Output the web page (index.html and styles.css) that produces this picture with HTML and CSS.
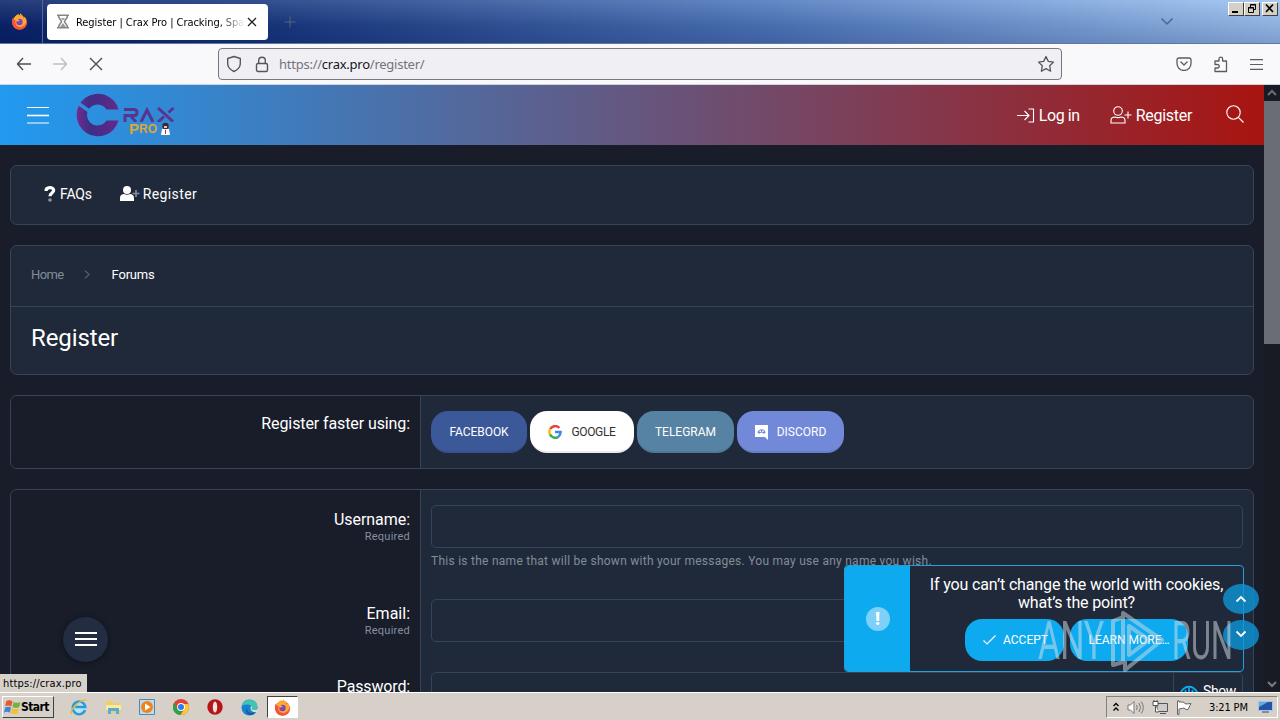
FILE: index.html
```html
<!DOCTYPE html>
<html lang="en">
<head>
<meta charset="utf-8">
<title>Register | Crax Pro</title>
<link rel="stylesheet" href="styles.css">
</head>
<body>
<div class="screen">
  <header class="tabbar">
    <div class="fxview">
      <svg width="17" height="17" viewBox="0 0 18 18"><use href="#firefox"/></svg>
    </div>
    <div class="tab">
      <svg class="hourglass" width="14" height="15" viewBox="0 0 14 15" fill="none" stroke="#858585" stroke-width="1.6"><path d="M1 1.2h12M1 13.8h12M2.5 1.5c0 3.5 3 4.5 3 6s-3 2.500-3 6M11.500 1.500c0 3.500-3 4.500-3 6s3 2.500 3 6"/><path d="M5 4h4L7 6.500zM7 9l3 4H4z" fill="#999" stroke="none"/></svg>
      <span class="tab-title">Register | Crax Pro | Cracking, Spamming</span>
      <svg class="tab-close" width="10" height="10" viewBox="0 0 10 10" stroke="#222" stroke-width="1.3"><path d="M1 1l8 8M9 1L1 9"/></svg>
    </div>
    <svg class="newtab" width="12" height="12" viewBox="0 0 12 12" stroke="#53647f"><path d="M6 0.500v11M0.500 6h11"/></svg>
    <svg class="alltabs" width="14" height="9" viewBox="0 0 14 9" fill="none" stroke="#496795" stroke-width="1.500"><path d="M1.500 1.500L7 7l5.500-5.500"/></svg>
    <div class="winbtns">
      <span class="winbtn"><svg width="14" height="12" viewBox="0 0 14 12"><path d="M3 8h6v2H3z"/></svg></span>
      <span class="winbtn"><svg width="14" height="12" viewBox="0 0 14 12" fill="none" stroke="#000"><path d="M5.500 4V1.500h5v5H9M5 2h6M3.500 4.500h5v5h-5zM3 5h6"/></svg></span>
      <span class="winbtn close"><svg width="14" height="12" viewBox="0 0 14 12" stroke="#000" stroke-width="1.700"><path d="M3 1.500l7 7.500M10 1.500L3 9"/></svg></span>
    </div>
  </header>

  <nav class="toolbar">
    <svg class="nav-back" width="16" height="14" viewBox="0 0 16 14" fill="none" stroke="#4c4c57" stroke-width="1.400"><path d="M15 7H1.500M7 1L1.500 7 7 13"/></svg>
    <svg class="nav-fwd" width="16" height="14" viewBox="0 0 16 14" fill="none" stroke="#bdbdc4" stroke-width="1.400"><path d="M1 7h13.500M9 1l5.500 6L9 13"/></svg>
    <svg class="nav-stop" width="14" height="14" viewBox="0 0 14 14" stroke="#4c4c57" stroke-width="1.400"><path d="M1 1l12 12M13 1L1 13"/></svg>
    <div class="urlbar">
      <svg width="16" height="18" viewBox="0 0 16 18" fill="none" stroke="#55555f" stroke-width="1.400"><path d="M8 1.500l6.300 2v5c0 4-3 6.500-6.300 8-3.300-1.500-6.300-4-6.300-8v-5z" stroke-linejoin="round"/></svg>
      <svg class="lock" width="14" height="17" viewBox="0 0 14 17" fill="none" stroke="#55555f" stroke-width="1.400"><rect x="1.500" y="7.500" width="11" height="8" rx="1.500"/><path d="M3.700 7.500V4.500a3.300 3.300 0 0 1 6.600 0v3"/></svg>
      <span class="url">https://<b>crax.pro</b>/register/</span>
      <svg class="star" width="18" height="18" viewBox="0 0 18 18" fill="none" stroke="#55555f" stroke-width="1.300" stroke-linejoin="round"><path d="M9 1.500l2.300 4.900 5.200.700-3.800 3.700.900 5.400L9 13.600l-4.600 2.600.900-5.400L1.500 7.100l5.200-.700z"/></svg>
    </div>
    <div class="toolbar-end">
      <svg width="16" height="14" viewBox="0 0 16 14" fill="none" stroke="#5b5b66" stroke-width="1.300"><path d="M3 1h10a2 2 0 0 1 2 2v3.500a6.500 6.500 0 0 1-14 0V3a2 2 0 0 1 2-2z"/><path d="M4.500 4.500L8 8l3.500-3.500"/></svg>
      <svg width="16" height="17" viewBox="0 0 16 17" fill="none" stroke="#5b5b66" stroke-width="1.300" stroke-linejoin="round"><path d="M2 15.500V12h2.500a1.700 1.700 0 0 0 0-3.500H2V5h4V3a1.800 1.800 0 0 1 3.600 0v2H13.500v10.500z"/></svg>
      <svg width="13" height="11" viewBox="0 0 13 11" stroke="#5b5b66" stroke-width="1.200"><path d="M0 .6h13M0 5.500h13M0 10.400h13"/></svg>
    </div>
  </nav>

  <main class="view">
    <div class="page">
      <div class="sitehead">
        <svg class="burger" width="22" height="17" viewBox="0 0 22 17" stroke="#fff"><path d="M0 .5h22M0 16h22"/><path d="M0 8.500h22" stroke-width="1.600"/></svg>
        <div class="logo">
          <svg width="43" height="44" viewBox="0 0 43 44"><defs><linearGradient id="lg" x1="0" x2="1"><stop offset="0" stop-color="#74298f"/><stop offset=".3" stop-color="#3f2f87"/><stop offset=".6" stop-color="#4c2b87"/><stop offset="1" stop-color="#65298c"/></linearGradient></defs><path d="M42.500 16.500A21.300 21.300 0 1 0 42.500 27.500H30.500A10.500 10.500 0 1 1 30.500 16.500z" fill="url(#lg)"/><path d="M2.500 10.500l10 7" stroke="#2d8ee0" stroke-width="3.500"/></svg>
          <div class="logo-words">
            <svg width="53" height="15" viewBox="0 0 53 15" fill="none" stroke="#57348f" stroke-width="3"><path d="M2 15V8.500h9c4 0 4-6 0-6H1M7 8l6 7M18 15l6-12 6 12M35 1l15 13.500M50.500 1l-5 4.500M41 9.500L35 15"/></svg>
            <span class="logo-pro">P<small>RO</small><svg width="9" height="14" viewBox="0 0 9 14"><path d="M1 7h7l1 6H0z" fill="#fff"/><circle cx="4.500" cy="4" r="3.200" fill="#392733"/><path d="M3 4h3v2H3z" fill="#f3c3a4"/><path d="M4 8h1v4H4z" fill="#c33"/></svg></span>
          </div>
        </div>
        <a class="login"><svg width="18" height="15" viewBox="0 0 18 15" fill="none" stroke="#fff" stroke-width="1.100"><path d="M0 7.500h12M7.500 3L12 7.500 7.500 12M11.500 1h5v13h-5"/></svg>Log in</a>
        <a class="signup"><svg width="22" height="18" viewBox="0 0 22 18" fill="none" stroke="#fff" stroke-width="1.100"><circle cx="8" cy="5" r="4.300"/><path d="M1 17v-2.500c0-2.500 2-3.500 4-3.500 2 .800 4 .800 6 0 2 0 4 1 4 3.500V17zM18 5.500v7M14.500 9h7"/></svg>Register</a>
        <svg class="search" width="18" height="18" viewBox="0 0 18 18" fill="none" stroke="#fff" stroke-width="1.100"><circle cx="7.500" cy="7.500" r="6.700"/><path d="M12.500 12.500l5 5"/></svg>
      </div>

      <div class="content">
        <div class="card menu">
          <a><svg width="12" height="16" viewBox="0 0 12 16"><path d="M2 5C2 .5 9.700 .7 9.700 4.300c0 2.700-3.700 2.700-3.700 6" fill="none" stroke="#fff" stroke-width="3.200"/><circle cx="6" cy="14" r="1.800" fill="#8d949f"/></svg><span class="faq">FAQs</span></a>
          <a class="menu-register"><svg width="20" height="16" viewBox="0 0 20 16"><circle cx="7" cy="4" r="4" fill="#fff"/><path d="M0 15v-3c0-3 2-4 4-4 2 1 4 1 6 0 2 0 4 1 4 4v3z" fill="#fff"/><path d="M16 4v7M12.500 7.500h7" stroke="#858e9b" stroke-width="1.600"/></svg><span>Register</span></a>
        </div>

        <div class="card titles">
          <div class="crumbs"><span class="crumb-home">Home</span><svg width="6" height="9" viewBox="0 0 6 9" fill="none" stroke="#7c8794"><path d="M1 .5l4 4-4 4"/></svg><span class="crumb-forums">Forums</span></div>
          <h1>Register</h1>
        </div>

        <div class="card fast">
          <div class="label"><span class="lbl l-fast">Register faster using:</span></div>
          <div class="field providers">
            <a class="prov facebook">FACEBOOK</a>
            <a class="prov google"><svg width="14" height="14" viewBox="0 0 14 14" fill="none" stroke-width="2.500"><path d="M2.200 4A5.600 5.600 0 0 1 11.300 3" stroke="#ea4335"/><path d="M2.200 4.200a5.600 5.600 0 0 0 0 5.600" stroke="#fbbc05"/><path d="M2.100 9.500a5.600 5.600 0 0 0 8.500 2.200" stroke="#34a853"/><path d="M10.500 11.600A5.500 5.500 0 0 0 12.600 7H7" stroke="#4285f4"/></svg>GOOGLE</a>
            <a class="prov telegram">TELEGRAM</a>
            <a class="prov discord"><svg width="13" height="15" viewBox="0 0 13 15"><path d="M0 0h13v15l-3-3H0z" fill="#fff"/><path d="M2.500 8c0-5 8-5 8 0l-2 .8-1-1H5.500l-1 1z" fill="#7289da"/><path d="M4.500 5.500h1.500v1.500H4.500zM7.200 5.500h1.500v1.500H7.200z" fill="#fff"/></svg>DISCORD</a>
          </div>
        </div>

        <div class="card form">
          <div class="row username">
            <div class="label"><span class="lbl l-user">Username:</span><small>Required</small></div>
            <div class="field"><div class="input"></div><p class="hint">This is the name that will be shown with your messages. You may use any name you wish.</p></div>
          </div>
          <div class="row email">
            <div class="label"><span class="lbl l-email">Email:</span><small>Required</small></div>
            <div class="field"><div class="input"></div></div>
          </div>
          <div class="row password">
            <div class="label"><span class="lbl l-pass">Password:</span></div>
            <div class="field"><div class="input pass"><span class="show"><svg width="18" height="14" viewBox="0 0 18 14" fill="none" stroke="#0eaaf0" stroke-width="1.800"><path d="M1 7c4-7 12-7 16 0-4 7-12 7-16 0z"/><path d="M9 3v7" /><path d="M6 5a3.500 3.500 0 1 0 6 0"/></svg>Show</span></div></div>
          </div>
        </div>
      </div>
    </div>
    <div class="scrollbar">
      <svg width="16" height="16" viewBox="0 0 16 16" fill="none" stroke="#6b6e76" stroke-width="2"><path d="M4 10l4-4 4 4"/></svg>
      <div class="thumb"></div>
      <svg class="sb-down" width="16" height="16" viewBox="0 0 16 16" fill="none" stroke="#777b82" stroke-width="2"><path d="M4 6l4 4 4-4"/></svg>
    </div>

    <div class="fab"><i></i><i></i><i></i></div>
    <div class="status">https://crax.pro</div>

    <div class="cookie">
      <div class="cookie-side"><span>!</span></div>
      <div class="cookie-body">
        <p><span class="ck1">If you can’t change the world with cookies,</span><br><span class="ck2">what’s the point?</span></p>
        <div class="cookie-actions">
          <a class="accept"><svg width="13" height="10" viewBox="0 0 13 10" fill="none" stroke="#fff" stroke-width="1.200"><path d="M.5 5.500L4 9l8.500-8.500"/></svg>ACCEPT</a>
          <a class="more">LEARN MORE…</a>
        </div>
      </div>
    </div>
    <div class="jump up"><svg width="12" height="8" viewBox="0 0 12 8" fill="none" stroke="#fff" stroke-width="1.800"><path d="M1.500 6.500L6 2l4.500 4.500"/></svg></div>
    <div class="jump down"><svg width="12" height="8" viewBox="0 0 12 8" fill="none" stroke="#fff" stroke-width="1.800"><path d="M1.500 1.500L6 6l4.500-4.500"/></svg></div>
    <div class="watermark">
      <span class="wm wm-any">ANY</span>
      <svg width="56" height="64" viewBox="0 0 56 64" fill="none" stroke="#d2dce4" stroke-width="4" stroke-linejoin="round"><path d="M14 8L4 12v44l10-3V4l39 27-37 30v-9M20 17v29l20-15z"/></svg>
      <span class="wm wm-run">RUN</span>
    </div>
  </main>

  <footer class="taskbar">
    <div class="start"><svg width="17" height="16" viewBox="0 0 15 14"><path d="M2 2c2-1.500 4-1 5.500 0l-1 4.500c-2-1-4-1-5.500 0z" fill="#e8582a"/><path d="M8.500 2.500c2 1 4 1 6 0l-1 4.500c-2 1-4 1-6 0z" fill="#6fb43c"/><path d="M1 7.500c2-1 3.500-1 5.200 0l-1 4.500c-2-1-3.500-1-5.200 0z" fill="#3e84d8"/><path d="M7.200 8c2 1 4 1 6 0l-1 4.500c-2 1-4 1-6 0z" fill="#f3c02e"/></svg><span>Start</span></div>
    <div class="apps">
      <span class="app"><svg width="18" height="18" viewBox="0 0 18 18" fill="none"><circle cx="9" cy="9" r="7" fill="#b8e4f8"/><path d="M15 12A6.300 6.300 0 1 1 15.300 9H5" stroke="#2d9bd8" stroke-width="2.500"/><path d="M1.500 16C-1 12 11 1 16.500 2" stroke="#edb83a" stroke-width="1.400"/></svg></span>
      <span class="app"><svg width="17" height="16" viewBox="0 0 17 16"><path d="M1 2h6l1 2h8v10H1z" fill="#efcf68"/><path d="M1 6h15v5H1z" fill="#fae9a5"/><path d="M3 9h11v6h-3v-3H6v3H3z" fill="#5aacd8"/></svg></span>
      <span class="app"><svg width="16" height="16" viewBox="0 0 16 16"><path d="M.5.5h15v15H.5z" fill="#bcdbf0" stroke="#4d8ab9"/><circle cx="8" cy="8" r="6" fill="#ef851a"/><path d="M6 4.500v7L11.500 8z" fill="#fff"/></svg></span>
      <span class="app"><svg width="16" height="16" viewBox="0 0 16 16"><use href="#chrome"/></svg></span>
      <span class="app"><svg width="16" height="16" viewBox="0 0 16 16"><circle cx="8" cy="8" r="7.700" fill="#b51519"/><ellipse cx="8" cy="8" rx="2.200" ry="5.500" fill="#ece6df"/></svg></span>
      <span class="app"><svg width="17" height="17" viewBox="0 0 17 17"><circle cx="8.500" cy="8.500" r="8" fill="#1b80ce"/><path d="M.8 7C2-2 16-1 16.500 7.500c0 4-5 4-6.500 2.500 2-3-1-5-4-4.500C3.500 5.500 1.500 6 .8 7z" fill="#40c6b0"/><path d="M6 8c-1 5 4 7 9 5-1 1.500-3 3-5 3-5-.5-6-5-4-8z" fill="#125da8"/><path d="M10 7c1.500 1 1.300 2 .5 3 1.500 1.500 4 1 6 0v3c-4 1-8.500-1-6.500-6z" fill="#d7ddd9"/></svg></span>
      <span class="app active"><svg width="17" height="17" viewBox="0 0 18 18"><use href="#firefox"/></svg></span>
    </div>
    <div class="tray">
      <svg width="6" height="10" viewBox="0 0 6 10" fill="none" stroke="#000" stroke-width="1.300"><path d="M.5 4L3 1.500 5.500 4M.5 8.500L3 6l2.500 2.500"/></svg>
      <svg width="17" height="15" viewBox="0 0 17 15" stroke="#777"><path d="M1 5h2.500L7 1.500v12L3.500 10H1z" fill="#fff"/><path d="M9.500 5q1.500 2.500 0 5M12 3q3 4.500 0 9M14.300 1.500q4 6 0 12" fill="none"/></svg>
      <svg width="16" height="15" viewBox="0 0 16 15" stroke="#555"><path d="M5 3.500h10.500v8H5zM8 13.500h6" fill="#ccc"/><path d="M1 1.500h5v4H1zM3.500 6v6h3M2 0v2M5 0v2" fill="#fff"/></svg>
      <svg width="16" height="15" viewBox="0 0 16 15" fill="#fff" stroke="#666"><path d="M1.500 1v13.500h1.500V9l5-1 2 1.500h2l3-6-5 .5-3-2H3V.5z"/></svg>
      <span class="clock">3:21 PM</span>
      <svg width="15" height="12" viewBox="0 0 15 12"><path d="M.5.500h14v9H.5z" fill="#2455a5" stroke="#9dc6eb"/><path d="M1 1h9L1 6z" fill="#70a6df"/><path d="M4 11h7" stroke="#445"/></svg>
    </div>
  </footer>
</div>
<svg class="defs" width="0" height="0">
  <defs>
    <g id="firefox"><circle cx="9" cy="10" r="7.800" fill="#f4513a"/><path d="M8 1c-3 1-5 4-5 6-2 6 3 10 8 9 6-1 7-9 3-12 0 1 0 2-.5 2C13 3 10.500 1.500 10 0c-1 2 0 4 1 5z" fill="#fcab2b"/><path d="M1.500 5c-2 7 2 13 8 12.500 5-.5 8-4 7.500-9-2 5-5 7-9 6-3-1-4-4-3-7-2 0-2.500-1-3.500-2.500z" fill="#f4543b"/><circle cx="9" cy="9.500" r="3.400" fill="#8144c0"/><path d="M5 7c2-1 4 0 4 1.500L6 9z" fill="#ffb52b"/></g>
    <g id="chrome"><circle cx="8" cy="8" r="8" fill="#e34133"/><path d="M1 4a8 8 0 0 0 6 12l4-6-6 0z" fill="#2ba24c"/><path d="M15.300 5H8l3.300 5L7.500 16A8 8 0 0 0 15.300 5z" fill="#fcc934"/><circle cx="8" cy="8" r="3.900" fill="#fff"/><circle cx="8" cy="8" r="3" fill="#3479e5"/></g>
  </defs>
</svg>
</body>
</html>
```

FILE: styles.css
```css
* { box-sizing: border-box; }
body { margin: 0; font-family: Roboto, "Liberation Sans", sans-serif; background: #181d29; }
svg { display: block; flex: none; }
p, h1 { margin: 0; font-weight: 400; }
.defs { position: absolute; }
.screen { width: 1280px; height: 720px; display: flex; flex-direction: column; overflow: hidden; }

/* Browser chrome */
.tabbar { flex: none; height: 44px; display: flex; align-items: center; border-bottom: 1px solid #63779d;
  background: linear-gradient(180deg, rgba(255,255,255,.12), rgba(0,0,40,.1) 60%, rgba(0,0,60,.2)), linear-gradient(90deg, #0a246a 0%, #17377f 20%, #4f79bd 60%, #9cc4f2 100%);
  font-family: "DejaVu Sans Condensed", "DejaVu Sans", sans-serif; }
.fxview { width: 43px; height: 43px; padding-left: 11px; display: flex; align-items: center; border-right: 1px solid #536899; }
.tab { width: 221px; height: 36px; margin-left: 4px; padding: 0 11px 0 9px; background: #fff; border-radius: 4px; display: flex; align-items: center; }
.tab-title { flex: 1; margin: 1px 2px 0 6px; overflow: hidden; white-space: nowrap; font-size: 11px; letter-spacing: -.05px; color: #000;
  -webkit-mask-image: linear-gradient(90deg, #000 85%, transparent); mask-image: linear-gradient(90deg, #000 85%, transparent); }
.newtab { margin-left: 16px; }
.alltabs { margin-left: auto; }
.winbtns { display: flex; align-self: flex-start; margin: 2px 2px 0 54px; }
.winbtn { width: 16px; height: 14px; background: #d4d0c8; border: 1px solid; border-color: #fff #404040 #404040 #fff; }
.winbtn.close { margin-left: 2px; }
.toolbar { flex: none; height: 41px; background: #f9f9fb; border-bottom: 1px solid #ccd4df; display: flex; align-items: center; }
.nav-back { margin-left: 16px; }
.nav-fwd { margin-left: 20px; }
.nav-stop { margin-left: 21px; }
.urlbar { width: 844px; height: 32px; margin-left: 115px; padding: 0 6px 0 7px; background: #f0f0f4; border: 1px solid #777782; border-radius: 4px; display: flex; align-items: center; }
.lock { margin-left: 13px; }
.url { margin-left: 10px; font: 13px "Noto Sans", sans-serif; letter-spacing: -.25px; color: #73737d; }
.url b { font-weight: 400; color: #15141a; }
.star { margin-left: auto; }
.toolbar-end { margin-left: auto; margin-right: 17px; display: flex; align-items: center; gap: 21px; }

/* Site */
.view { flex: 1; min-height: 0; position: relative; display: flex; background: #181d29; color: #fff; }
.page { width: 1264px; overflow: hidden; }
.sitehead { height: 60px; display: flex; align-items: center; padding: 0 20px 0 27px; background: linear-gradient(90deg, #219af0, #a81410); font-size: 16px; }
.logo { margin-left: 27px; display: flex; }
.logo-words { padding-top: 14px; margin-left: 4px; }
.logo-pro { display: flex; align-items: flex-end; margin-left: 6px; height: 14px; font: bold 15px/14px "Liberation Sans", sans-serif; color: #dba63a; }
.logo-pro small { font-size: 12px; line-height: 13px; margin-right: 4px; }
.login, .signup { display: flex; align-items: center; gap: 4px; }
.login { margin-left: auto; letter-spacing: -.4px; }
.signup { margin-left: 30px; letter-spacing: -.3px; }
.search { margin-left: 34px; margin-top: -2px; }
.content { padding: 20px 10px 0; display: flex; flex-direction: column; gap: 20px; }
.card { flex: none; background: #1f2939; border: 1px solid #344559; border-radius: 7px; }
.menu { height: 60px; display: flex; align-items: center; padding: 0 33px 2px; font-size: 14px; }
.menu a { display: flex; align-items: center; gap: 4px; }
.menu .menu-register { margin-left: 28px; gap: 3px; letter-spacing: .4px; }
.faq { letter-spacing: -.2px; }
.titles { height: 130px; }
.crumbs { height: 61px; border-bottom: 1px solid #344559; display: flex; align-items: center; padding: 0 20px 3px; font-size: 13px; }
.crumb-home { color: #828c99; margin-right: 20px; letter-spacing: -.6px; }
.crumb-forums { margin: -1px 0 0 22px; letter-spacing: -.2px; }
.titles h1 { height: 64px; line-height: 63px; padding-left: 20px; font-size: 24px; letter-spacing: -.1px; }
.fast { height: 74px; display: flex; overflow: hidden; }
.label { width: 410px; flex: none; padding: 18px 10px 0; text-align: right; background: #181d29; border-right: 1px solid #344559; font-size: 16px; line-height: 20px; }
.lbl { display: block; }
.label small { display: block; font-size: 11px; line-height: 13px; letter-spacing: .25px; color: #8590a1; }
.field { flex: 1; padding: 15px 10px 0; }
.providers { display: flex; gap: 3px; font-size: 12px; }
.prov { height: 42px; border-radius: 17px; padding-top: 2px; display: flex; align-items: center; justify-content: center; border-bottom: 2px solid rgba(0,0,0,.08); white-space: nowrap; }
.facebook { width: 96px; background: #3b5998; letter-spacing: -.05px; }
.google { width: 104px; background: #fff; color: #333; gap: 9px; letter-spacing: -.35px; }
.telegram { width: 97px; background: #5682a3; letter-spacing: 0; }
.discord { width: 107px; background: #7289da; gap: 9px; letter-spacing: 0; }
.form { height: 240px; overflow: hidden; }
.row { display: flex; }
.row .label { padding-top: 20px; }
.username { height: 94px; }
.email { height: 73px; }
.password { height: 90px; }
.input { height: 43px; border: 1px solid #344559; border-radius: 5px; }
.hint { margin-top: 6px; font-size: 12px; line-height: 14px; letter-spacing: .26px; color: #828c9a; white-space: nowrap; }
.pass { display: flex; justify-content: flex-end; }
.show { width: 69px; padding: 10px 0 0 6px; border-left: 1px solid #344559; display: flex; gap: 5px; font-size: 14px; letter-spacing: -.4px; }
.show svg { margin-top: 2px; }
.l-fast { letter-spacing: -.1px; }
.l-user { letter-spacing: -.05px; }
.l-pass { letter-spacing: -.15px; }

.scrollbar { width: 16px; background: #181b24; display: flex; flex-direction: column; }
.thumb { height: 243px; background: #6b6d75; }
.sb-down { margin-top: auto; }

/* Floating layers */
.fab { position: absolute; left: 63px; top: 532px; width: 45px; height: 45px; border-radius: 50%; background: #222d42; box-shadow: 0 1px 5px #0d111a; display: flex; flex-direction: column; align-items: center; justify-content: center; gap: 4px; padding-bottom: 1px; }
.fab i { width: 22px; height: 2px; background: #fff; }
.status { position: absolute; left: 0; bottom: 0; width: 87px; height: 18px; padding-left: 3px; background: #d6d2ca; color: #000; font: 11px/20px "DejaVu Sans Condensed", sans-serif; letter-spacing: .15px; }
.cookie { position: absolute; left: 844px; top: 480px; width: 400px; height: 107px; display: flex; border: 1px solid #239fdd; border-radius: 4px; background: #1f2939; overflow: hidden; }
.cookie-side { width: 65px; background: #0eaaf0; display: flex; align-items: center; justify-content: center; }
.cookie-side span { width: 24px; height: 24px; border-radius: 50%; background: #7dd0f7; text-align: center; font: 900 18px/24px Roboto, sans-serif; }
.cookie-body { flex: 1; padding-top: 10px; text-align: center; font-size: 16px; line-height: 18px; }
.ck1, .ck2 { letter-spacing: -.14px; }
.cookie-actions { display: flex; gap: 6px; margin: 7px 0 0 55px; font-size: 12px; }
.cookie-actions a { height: 42px; border-radius: 17px; background: #0eaaf0; display: flex; align-items: center; justify-content: center; gap: 7px; }
.accept { width: 99px; padding-left: 2px; }
.more { width: 118px; }
.jump { position: absolute; left: 1223px; width: 36px; height: 30px; border-radius: 50%; background: rgba(14,151,220,.78); display: flex; align-items: center; justify-content: center; }
.up { top: 499px; }
.down { top: 535px; padding-bottom: 3px; }
.watermark { position: absolute; left: 1038px; top: 524px; height: 64px; display: flex; align-items: center; gap: 7px; opacity: .5; }
.wm { font: 400 53px/64px Roboto, sans-serif; color: #dce3e8; transform-origin: 0 50%; white-space: nowrap; }
.wm-any { width: 64px; transform: scaleX(.64); }
.wm-run { transform: scaleX(.58); }

/* Taskbar */
.taskbar { flex: none; height: 28px; background: #d6d0c8; border-top: 1px solid #fff; display: flex; align-items: center; font-family: "DejaVu Sans Condensed", sans-serif; font-size: 11px; color: #000; }
.start { width: 52px; height: 22px; margin: 1px 0 0 2px; padding-left: 1px; border: 1px solid; border-color: #fff #404040 #404040 #fff; display: flex; align-items: center; gap: 0; font-size: 12px; font-weight: 700; letter-spacing: -.6px; }
.apps { display: flex; margin: 1px 0 0 8px; align-items: center; }
.app { width: 34px; height: 22px; display: flex; align-items: center; justify-content: center; }
.app.active { width: 31px; background: #fff; border: 1px solid; border-color: #404040 #fff #fff #404040; margin-left: 1px; }
.tray { width: 172px; height: 22px; margin: 1px 2px 0 auto; padding: 0 2px 0 6px; border: 1px solid; border-color: #858078 #fff #fff #858078; display: flex; align-items: center; gap: 8px; }
.tray svg:last-child { margin-left: 1px; }
.clock { margin-left: 9px; margin-right: 1px; letter-spacing: -.15px; white-space: nowrap; }
```
